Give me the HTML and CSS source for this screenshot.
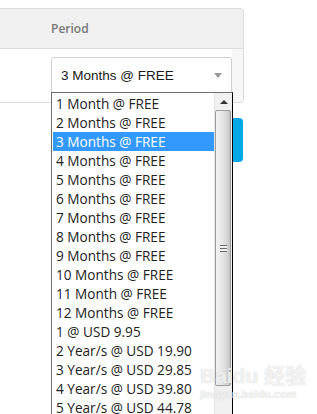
FILE: index.html
```html
<!DOCTYPE html>
<html lang="en">
<head>
    <meta charset="UTF-8">
    <meta name="viewport" content="width=device-width, initial-scale=1.0">
    <title>Period</title>
    <link rel="stylesheet" href="styles.css">
</head>
<body>
    <div class="page">
        <div class="panel">
            <div class="panel-head">
                <span class="col-title">Period</span>
            </div>
            <div class="panel-body">
                <div class="select">
                    <span class="select-value">3 Months @ FREE</span>
                    <span class="select-arrow"></span>
                </div>
            </div>
        </div>

        <button class="order-button" type="button">Continue</button>

        <!-- 下拉列表 (打开状态) -->
        <div class="dropdown">
            <ul class="options">
                <li>1 Month @ FREE</li>
                <li>2 Months @ FREE</li>
                <li class="active">3 Months @ FREE</li>
                <li>4 Months @ FREE</li>
                <li>5 Months @ FREE</li>
                <li>6 Months @ FREE</li>
                <li>7 Months @ FREE</li>
                <li>8 Months @ FREE</li>
                <li>9 Months @ FREE</li>
                <li>10 Months @ FREE</li>
                <li>11 Month @ FREE</li>
                <li>12 Months @ FREE</li>
                <li>1 @ USD 9.95</li>
                <li>2 Year/s @ USD 19.90</li>
                <li>3 Year/s @ USD 29.85</li>
                <li>4 Year/s @ USD 39.80</li>
                <li>5 Year/s @ USD 44.78</li>
            </ul>
            <div class="scrollbar">
                <div class="scroll-up"><span></span></div>
                <div class="thumb"><span class="grip"></span></div>
            </div>
        </div>

        <div class="watermark">
            <span class="wm-logo">Bai<b>du</b> 经验</span>
            <span class="wm-url">jingyan.baidu.com</span>
        </div>
    </div>
</body>
</html>
```

FILE: styles.css
```css
/* 全局样式 */
body {
    margin: 0;
    padding: 0;
    background: #fff;
    font-family: "Liberation Sans", Arial, sans-serif;
    overflow: hidden;
}

.page {
    position: relative;
    width: 317px;
    height: 414px;
    padding-top: 8px;
    box-sizing: border-box;
}

/* 表格面板 */
.panel {
    width: 244px;
    border: 1px solid #dcdcdc;
    border-left: none;
    border-radius: 0 4px 4px 0;
    box-sizing: border-box;
    overflow: hidden;
}

.panel-head {
    height: 39px;
    background-color: #f0f0f0;
    border-bottom: 1px solid #dcdcdc;
    padding-left: 51px;
    display: flex;
    align-items: center;
}

.col-title {
    font-family: "Open Sans", sans-serif;
    font-size: 12px;
    font-weight: 600;
    color: #777;
}

.panel-body {
    height: 53px;
    padding: 8px 0 0 51px;
    box-sizing: border-box;
    background: linear-gradient(to right, #fff 232px, #f7f7f7 232px);
}

/* 下拉框 */
.select {
    width: 181px;
    height: 37px;
    border: 1px solid #cfcfcf;
    border-radius: 3px;
    background-color: #fff;
    box-sizing: border-box;
    display: flex;
    align-items: center;
    padding: 0 9px 0 9px;
}

.select-value {
    flex: 1;
    font-size: 13.5px;
    color: #1a1a1a;
}

.select-arrow {
    width: 0;
    height: 0;
    border-left: 4px solid transparent;
    border-right: 4px solid transparent;
    border-top: 5px solid #9a9a9a;
}

/* 蓝色按钮 (被下拉列表遮住) */
.order-button {
    display: block;
    margin: 15px 0 0 143px;
    width: 100px;
    height: 44px;
    border: none;
    border-radius: 0 4px 4px 0;
    background-color: #00a9e6;
    color: #fff;
    font-size: 14px;
}

/* 打开的下拉列表 */
.dropdown {
    position: absolute;
    left: 51px;
    top: 92px;
    width: 182px;
    height: 340px;
    border: 1px solid #707070;
    border-right-color: #000;
    background-color: #fff;
    box-sizing: border-box;
    display: flex;
}

.options {
    flex: 1;
    list-style: none;
    margin: 0;
    padding: 1px 0 0 1px;
}

.options li {
    height: 19px;
    line-height: 19px;
    padding-left: 3px;
    font-family: "Open Sans", sans-serif;
    font-size: 13.6px;
    color: #222;
    white-space: nowrap;
}

.options li.active {
    background-color: #3399ff;
    color: #fff;
}

/* 滚动条 */
.scrollbar {
    width: 17px;
    background-color: #f0f0f0;
    border-left: 1px solid #e6e6e6;
    display: flex;
    flex-direction: column;
}

.scroll-up {
    height: 17px;
    display: flex;
    align-items: center;
    justify-content: center;
}

.scroll-up span {
    width: 0;
    height: 0;
    border-left: 4px solid transparent;
    border-right: 4px solid transparent;
    border-bottom: 4px solid #333;
}

.thumb {
    height: 274px;
    margin: 0 1px 0 0;
    border: 1px solid #9c9c9c;
    border-radius: 2px;
    background: linear-gradient(to right, #f2f2f2, #e6e6e6 45%, #d2d2d2 85%, #bdbdbd);
    display: flex;
    align-items: center;
    justify-content: center;
}

.grip {
    width: 7px;
    height: 7px;
    background: repeating-linear-gradient(to bottom, #6a6a6a 0, #6a6a6a 1px, #eee 1px, #eee 3px);
}

/* 水印 */
.watermark {
    position: absolute;
    left: 200px;
    top: 364px;
    display: flex;
    flex-direction: column;
    color: rgba(255, 255, 255, 0.75);
    text-shadow: 0 0 1px rgba(160, 160, 160, 0.6);
    pointer-events: none;
}

.wm-logo {
    font-family: "Liberation Sans", "Noto Sans CJK SC", sans-serif;
    font-size: 21px;
    line-height: 24px;
    font-weight: bold;
}

.wm-url {
    font-family: "Liberation Sans", sans-serif;
    font-size: 11px;
    line-height: 13px;
    font-weight: bold;
}
```
